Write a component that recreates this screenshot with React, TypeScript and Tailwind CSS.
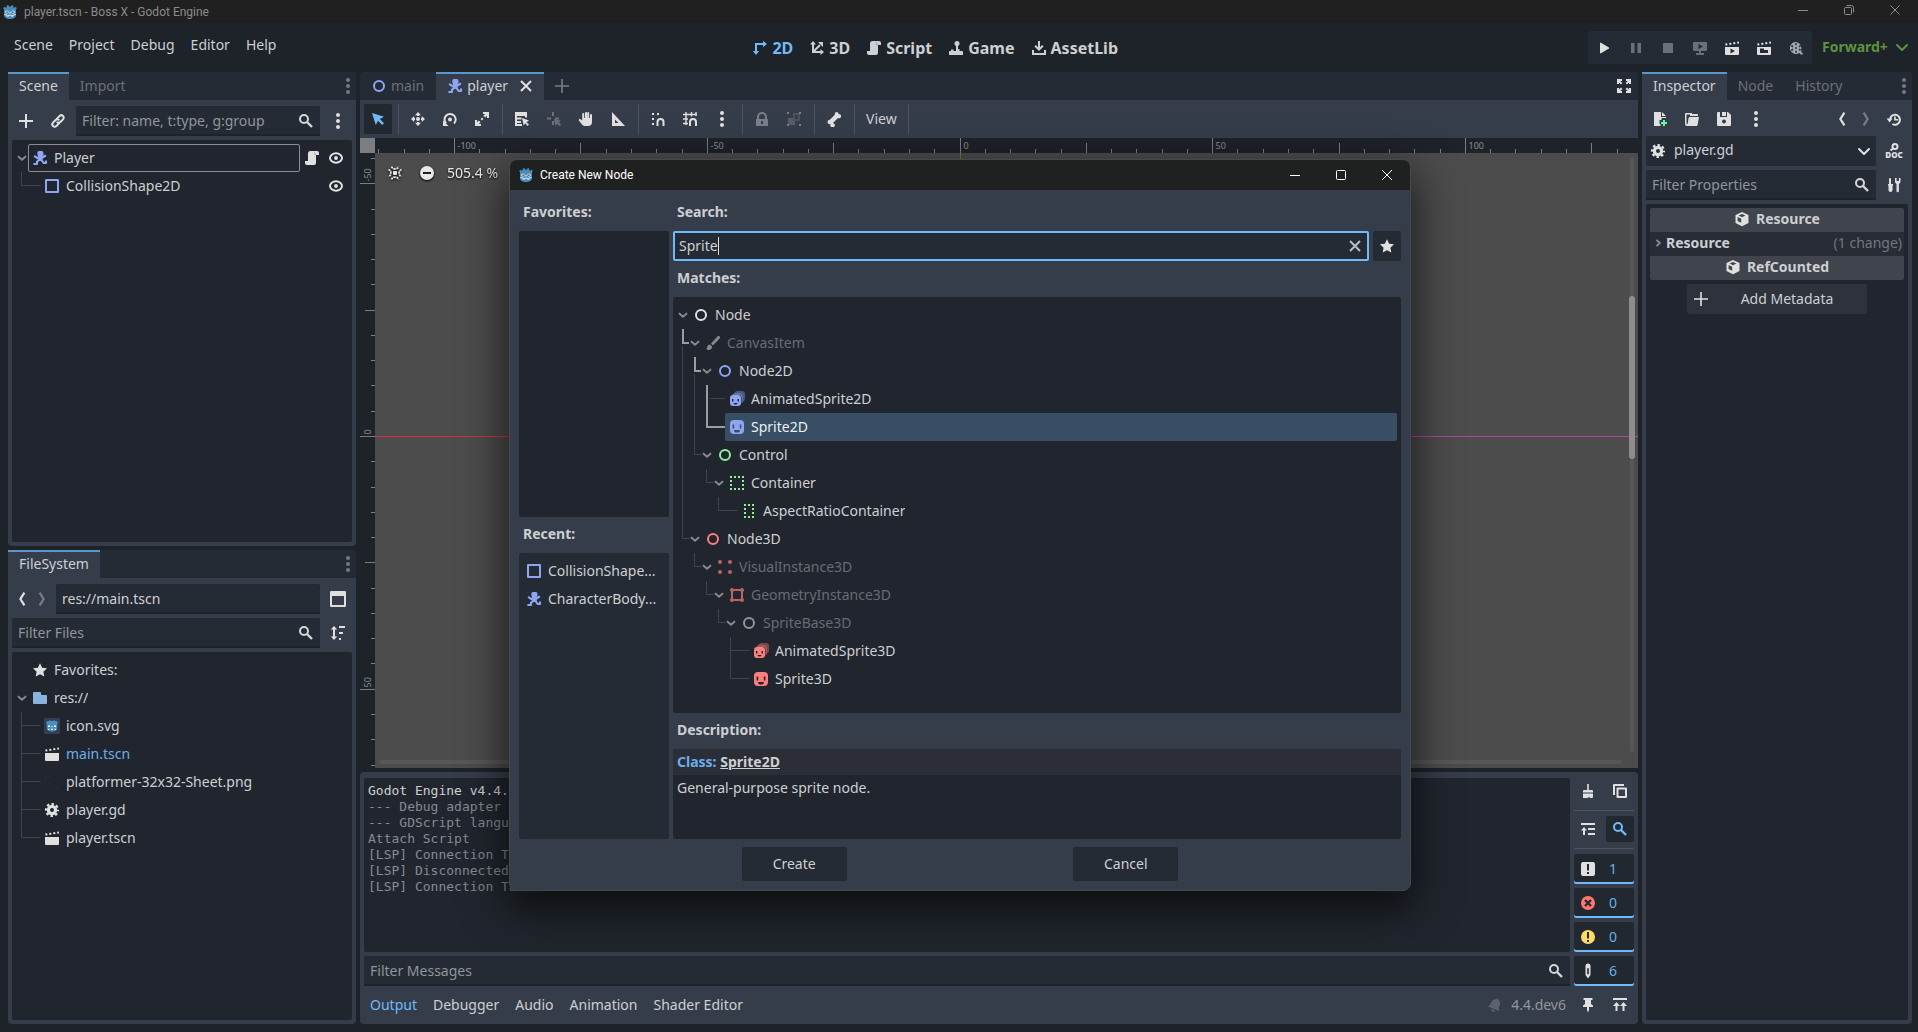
import type { ReactNode } from "react";

const icons: Record<string, ReactNode> = {
  node: <circle cx="8" cy="8" r="5" fill="none" stroke="currentColor" strokeWidth="2" />,
  collision: (
    <rect x="2" y="2" width="12" height="12" fill="none" stroke="currentColor" strokeWidth="2" strokeLinejoin="round" />
  ),
  character: (
    <g>
      <rect x="5.400" y="1" width="6" height="5" rx="1.500" />
      <path d="M6 5h4.500v4.500L9 11H6z" />
      <path
        d="M2.800 6.400 5.400 8M10 7.800l3.200-2M7 10 5 11.800V14H2.200M9.600 10l2 3H14v-1.600"
        fill="none"
        stroke="currentColor"
        strokeWidth="2.200"
        strokeLinejoin="round"
        strokeLinecap="round"
      />
    </g>
  ),
  plus: <path d="M7 1h2v6h6v2H9v6H7V9H1V7h6z" />,
  thinPlus: <path d="M7.200 1h1.600v6.200H15v1.600H8.800V15H7.200V8.800H1V7.200h6.200z" />,
  link: (
    <g fill="none" stroke="currentColor" strokeWidth="2" strokeLinecap="round">
      <path d="M7 5.600 9.600 3a2.400 2.400 0 0 1 3.400 3.400L10.400 9a2.400 2.400 0 0 1-3 .3" />
      <path d="M9 10.400 6.400 13A2.400 2.400 0 0 1 3 9.600L5.600 7a2.400 2.400 0 0 1 3-.3" />
    </g>
  ),
  search: (
    <g fill="none" stroke="currentColor" strokeWidth="2">
      <circle cx="6" cy="6" r="4" />
      <path d="m9 9 5 5" strokeWidth="2.400" />
    </g>
  ),
  kebab: (
    <g>
      <circle cx="8" cy="2" r="2" />
      <circle cx="8" cy="8" r="2" />
      <circle cx="8" cy="14" r="2" />
    </g>
  ),
  chevron: <path d="m3.400 6.200 4.600 4 4.600-4" fill="none" stroke="currentColor" strokeWidth="2.600" strokeLinecap="round" />,
  chevronThin: <path d="m3 6 5 5 5-5" fill="none" stroke="currentColor" strokeWidth="2" strokeLinecap="round" strokeLinejoin="round" />,
  chevronRight: <path d="m6 3.800 4.400 4.200L6 12.200" fill="none" stroke="currentColor" strokeWidth="2.600" />,
  back: <path d="M10.400 1.600 6.400 8l4 6.400" fill="none" stroke="currentColor" strokeWidth="2.200" />,
  forward: <path d="m5.600 1.600 4 6.400-4 6.400" fill="none" stroke="currentColor" strokeWidth="2.200" />,
  close: <path d="m3 3 10 10M13 3 3 13" fill="none" stroke="currentColor" strokeWidth="2" />,
  eye: (
    <g>
      <ellipse cx="8" cy="8" rx="6" ry="4.700" fill="none" stroke="currentColor" strokeWidth="2" />
      <circle cx="8" cy="8" r="2" />
    </g>
  ),
  script: (
    <g>
      <path d="M6.500 1A2.500 2.500 0 0 0 4 3.500V11H1v2a2 2 0 0 0 2 2h7a2 2 0 0 0 2-2V5h3V3a2 2 0 0 0-2-2z" />
      <path d="M10.500 1.600v3.200h1.600" fill="none" stroke="#000" strokeOpacity=".18" />
    </g>
  ),
  window: <path d="M0 1.200A1.200 1.200 0 0 1 1.200 0h13.600A1.200 1.200 0 0 1 16 1.200v13.600a1.200 1.200 0 0 1-1.200 1.200H1.200A1.200 1.200 0 0 1 0 14.800zM2 5v9h12V5z" fillRule="evenodd" />,
  sort: (
    <path d="M4 1 .8 4.600H3v6.800H.8L4 15l3.200-3.600H5V4.600h2.200zM9 1h6v2H9zm0 6h4v2H9zm0 6h2v2H9z" />
  ),
  star: <path d="m8 1.200 2.100 4.500 4.900.6-3.600 3.400.9 4.900L8 12.200l-4.300 2.400.9-4.900L1 6.300l4.900-.6z" />,
  folder: <path d="M2 2a1 1 0 0 0-1 1v10a1 1 0 0 0 1 1h12a1 1 0 0 0 1-1V6a1 1 0 0 0-1-1h-4a1 1 0 0 1-1-1V3a1 1 0 0 0-1-1z" />,
  scene: (
    <g>
      <path d="M1 7h14v7a1 1 0 0 1-1 1H2a1 1 0 0 1-1-1z" />
      <path d="m1.200 3.600 1.800-.3.600 1.900-2 .3zM5 3l2-.3.600 1.900-2 .3zm4-.6 2-.3.500 1.900-2 .3zm4-.6 1.800-.3.300 1.900-1.600.3z" />
    </g>
  ),
  playScene: (
    <g>
      <path d="M1 7h14v7a1 1 0 0 1-1 1H2a1 1 0 0 1-1-1zm5.500 1.500v5l4.500-2.500z" fillRule="evenodd" />
      <path d="m1.200 3.600 1.800-.3.600 1.900-2 .3zM5 3l2-.3.600 1.900-2 .3zm4-.6 2-.3.500 1.900-2 .3zm4-.6 1.800-.3.300 1.900-1.600.3z" />
    </g>
  ),
  playCustom: (
    <g>
      <path d="M1 7h14v7a1 1 0 0 1-1 1H2a1 1 0 0 1-1-1zm3 1.500v4.500h8V10H8V8.500z" fillRule="evenodd" />
      <path d="m1.200 3.600 1.800-.3.600 1.900-2 .3zM5 3l2-.3.600 1.900-2 .3zm4-.6 2-.3.500 1.900-2 .3zm4-.6 1.800-.3.300 1.900-1.600.3z" />
    </g>
  ),
  gear: (
    <g fill="none" stroke="currentColor">
      <circle cx="8" cy="8" r="3.600" strokeWidth="3.200" />
      <circle cx="8" cy="8" r="6" strokeWidth="2.200" strokeDasharray="2.500 2.212" strokeDashoffset="1.250" />
    </g>
  ),
  cursor: <path d="m2 2 3.800 12 2.200-4.200 4.200 4.200 1.800-1.800-4.200-4.200L14 5.800z" />,
  move: (
    <g>
      <circle cx="8" cy="8" r="2" />
      <path d="M8 1 5 4.200h2V5h2v-.8h2zM8 15l-3-3.200h2V11h2v.8h2zM1 8l3.200-3v2H5v2h-.8v2zM15 8l-3.200-3v2H11v2h.8v2z" />
    </g>
  ),
  rotate: (
    <g>
      <circle cx="8" cy="8.500" r="2" />
      <path d="M12 12.500a5.600 5.600 0 1 0-8-.2" fill="none" stroke="currentColor" strokeWidth="2" />
      <path d="M1 9.500V15h5.500z" />
    </g>
  ),
  scale: (
    <g>
      <path d="M15 1H9v2h2.200L9.400 4.800l1.800 1.800L13 4.800V7h2zM1 15h6v-2H4.800l1.800-1.800-1.800-1.800L3 11.200V9H1z" />
      <path d="M6.600 8 8 6.600 9.400 8 8 9.400z" />
    </g>
  ),
  listSelect: (
    <path d="M1 1h12v5.500h-2V5H3v1.500h4.500v2H3V10h4v2H3v1h5v2H1zm7 6 1.700 7.500 1.500-2.300 2.300 2.800 1.500-1.500-2.600-2.300L15 9.500z" />
  ),
  pivot: (
    <path d="M6 1h2v4H6zM1 6.500h4v2H1zm8 0h4v2H9zM6 10h2v4H6zm2-2 1.600 7 1.600-2.200L13.500 15l1.500-1.500-2.300-2.300L15 9.800z" opacity=".8" />
  ),
  hand: (
    <path d="M8 1a1 1 0 0 0-1 1v5H6.200V3a1 1 0 0 0-2 0v6.500L2.600 8.200a1.100 1.100 0 0 0-1.600 1.500l3.500 4.200A3 3 0 0 0 6.800 15H10a4 4 0 0 0 4-4V4a1 1 0 0 0-2 0v3h-.8V2a1 1 0 0 0-2 0v5H9V2a1 1 0 0 0-1-1z" />
  ),
  ruler: <path d="M2 1v14h13zm3 7.500 3.500 3.500H5z" fillRule="evenodd" />,
  snap: (
    <g>
      <path d="M2 2h2v2H2zm5 0h2v2H7zM2 7h2v2H2zm0 5h2v2H2z" />
      <path d="M7.500 15v-4a3 3 0 0 1 6 0v4" fill="none" stroke="currentColor" strokeWidth="2" />
    </g>
  ),
  gridSnap: (
    <g fill="none" stroke="currentColor" strokeWidth="1.400">
      <path d="M4 1v13M9.500 1v4.500M14 1v4M1 3.500h14M1 8h5M1 12.500h5" />
      <path d="M8 15v-4a3 3 0 0 1 6 0v4" strokeWidth="2" />
    </g>
  ),
  lock: <path d="M8 1a5 5 0 0 0-5 5v2H2v7h12V8h-1V6a5 5 0 0 0-5-5zm0 2a3 3 0 0 1 3 3v2H5V6a3 3 0 0 1 3-3zM7 10h2v3H7z" fillRule="evenodd" />,
  group: (
    <g>
      <path d="M1 1h2v2H1zm12 0h2v2h-2zM1 13h2v2H1zm12 0h2v2h-2z" />
      <path d="M2 7h5v3h2v4H2z" opacity=".5" />
      <path d="M8 3h5v6H8z" fill="none" stroke="currentColor" strokeWidth="2" opacity=".35" />
    </g>
  ),
  bone: (
    <path d="M11 1a2.200 2.200 0 0 0-2.200 2.800L3.800 8.800A2.200 2.200 0 1 0 5 12.800 2.200 2.200 0 1 0 7.200 12.200l-.2-.3 5-4.800a2.200 2.200 0 1 0 .6-4.200A2.200 2.200 0 0 0 11 1z" />
  ),
  expand: (
    <path d="M1 1h5v2H4.400l2 2L5 6.400l-2-2V6H1zm14 0v5h-2V4.400l-2 2L9.600 5l2-2H10V1zM1 15v-5h2v1.600l2-2L6.400 11l-2 2H6v2zm14 0h-5v-2h1.600l-2-2L11 9.600l2 2V10h2z" />
  ),
  center: (
    <g>
      <rect x="6" y="6" width="4" height="4" rx="1" />
      <path
        d="M4.500 1.500C5 3 6 3.800 8 3.800s3-.8 3.500-2.300M4.500 14.500c.5-1.500 1.500-2.300 3.500-2.300s3 .8 3.500 2.300M1.500 4.500C3 5 3.800 6 3.800 8s-.8 3-2.300 3.500M14.500 4.500C13 5 12.200 6 12.200 8s.8 3 2.300 3.500"
        fill="none"
        stroke="currentColor"
        strokeWidth="1.800"
        strokeDasharray="2.200 .7"
      />
    </g>
  ),
  minusCircle: <path d="M8 1a7 7 0 1 0 0 14A7 7 0 0 0 8 1zM4 7h8v2H4z" fillRule="evenodd" />,
  twoD: (
    <g>
      <path d="M4 12V4h8" fill="none" stroke="currentColor" strokeWidth="2" />
      <path d="m11 .8 4 3.200-4 3.200zM.8 11 4 15l3.200-4z" />
    </g>
  ),
  threeD: (
    <g>
      <path d="M4 4v8h8M4 12l7-7" fill="none" stroke="currentColor" strokeWidth="2" />
      <path d="M4 1 1 4.500h6zm11 11-3.500-3v6zM14 2H9l5 5z" />
    </g>
  ),
  game: (
    <g>
      <circle cx="9" cy="3.500" r="2.500" />
      <path d="M8 5h2v4h1.500v2H14a1 1 0 0 1 1 1v3H1v-3a1 1 0 0 1 1-1h1V9.500h2.500V11H8z" />
    </g>
  ),
  assetLib: (
    <path d="M7 1v6.200L4.900 5 3.400 6.500 8 11l4.600-4.500L11.100 5 9 7.200V1zM1 10v5h14v-5h-2v3H3v-3z" />
  ),
  play: <path d="M4 3.200v9.600a.6.600 0 0 0 .9.500l8-4.800a.6.600 0 0 0 0-1L4.900 2.700a.6.600 0 0 0-.9.500z" />,
  pause: <path d="M3 3h3.500v10H3zm6.500 0H13v10H9.500z" />,
  stop: <rect x="3" y="3" width="10" height="10" rx=".6" />,
  remote: (
    <path d="M2 2a1 1 0 0 0-1 1v7a1 1 0 0 0 1 1h5v2H4v2h8v-2H9v-2h5a1 1 0 0 0 1-1V3a1 1 0 0 0-1-1zm4.500 2 4.500 2.500L6.500 9z" fillRule="evenodd" />
  ),
  movie: (
    <path
      d="M8 2a6 6 0 1 0 3.500 10.800c.3 1.300 1.300 2 3 2v-2c-.8 0-1.200-.4-1.200-1.200V8A6 6 0 0 0 8 2zm-.8 1.200h1.600v2H7.200zM3.800 5 5.500 6l-.8 1.400L3 6.400zm8.400 0 .8 1.400-1.700 1L10.500 6zM8 7a1 1 0 1 1 0 2 1 1 0 0 1 0-2zM4.700 8.600l.8 1.400-1.700 1L3 9.600zm6.600 0 1.700 1-.8 1.400-1.700-1zm-4.100 2.200h1.600v2H7.200z"
      fillRule="evenodd"
    />
  ),
  fileNew: (
    <g>
      <path d="M2 1v14h6.500v-2H7.500v-4h2V7H14V6H9V1zm8 0v4h4z" />
      <path d="M11 9h2v2h2v2h-2v2h-2v-2H9v-2h2z" fill="#5fff97" />
    </g>
  ),
  open: (
    <path d="M2 2a1 1 0 0 0-1 1v10a2 2 0 0 0 2 2h9.500a1 1 0 0 0 1-.8L15 6H6a1.500 1.500 0 0 0-1.500 1.200L3.600 13H2.500V3.500H6V5h8V4a1 1 0 0 0-1-1H8V2z" />
  ),
  save: <path d="M2 1a1 1 0 0 0-1 1v12a1 1 0 0 0 1 1h12a1 1 0 0 0 1-1V4l-3-3zm2 0h2v4h4V1h1v5H4zm4 7.500a2 2 0 1 1 0 4 2 2 0 0 1 0-4z" fillRule="evenodd" />,
  history: (
    <g>
      <path d="M4 9a5 5 0 1 1 2.400 4" fill="none" stroke="currentColor" strokeWidth="2" />
      <path d="M.6 7.500h6L3.600 11.500zM8.200 5.500h1.600V8h2.400v1.600h-4z" />
    </g>
  ),
  tools: (
    <path d="M4 1a1 1 0 0 0-1 1v5H2v1l.5 1v4a2 2 0 0 0 4 0V9L7 8V7H5V2a1 1 0 0 0-1-1zM9 1v3.500a3 3 0 0 0 1.500 2.500v7a1.200 1.200 0 0 0 2.400 0V7A3 3 0 0 0 14.500 4.500V1h-1.600v3h-2.300V1z" />
  ),
  cube: (
    <path d="m8 .9-6.500 3v8.200L8 15.200l6.500-3.100V3.900zm0 2 3.400 1.600L8 6.300 4.600 4.500zM3.600 6l3.600 1.700v4.100L3.600 10z" fillRule="evenodd" />
  ),
  broom: <path d="M7.200 1h1.600v6H12a1 1 0 0 1 1 1v1.500H3V8a1 1 0 0 1 1-1h3.200zM3 10.500h10V14a1 1 0 0 1-1 1H9.500l.5-1.500L7.500 15H3z" />,
  copy: (
    <g fill="none" stroke="currentColor" strokeWidth="2" strokeLinejoin="round">
      <path d="M2 12V2h10" />
      <rect x="5.500" y="5.500" width="8.500" height="8.500" />
    </g>
  ),
  collapse: <path d="M1 2h14v2H1zm7 5h7v2H8zm0 5h7v2H8zM4 6l3 3.500H5V14H3V9.500H1z" />,
  message: <path d="M3 1h10a2 2 0 0 1 2 2v10a2 2 0 0 1-2 2H3a2 2 0 0 1-2-2V3a2 2 0 0 1 2-2zm4 2v6.500h2V3zm0 8v2h2v-2z" fillRule="evenodd" />,
  error: (
    <g>
      <circle cx="8" cy="8" r="7" fill="#ff786b" />
      <path d="m5 5 6 6m0-6-6 6" stroke="#252b34" strokeWidth="2.400" />
    </g>
  ),
  warning: (
    <g>
      <circle cx="8" cy="8" r="7" fill="#ffdd65" />
      <path d="M7 3h2v6.500H7zm0 8h2v2H7z" fill="#252b34" />
    </g>
  ),
  edit: <path d="M5.500 3a2.500 2.500 0 0 1 5 0v9L8 15.400 5.500 12zm1.700 2.200v6h1.600v-6z" fillRule="evenodd" />,
  pin: <path d="M3.500 1h9v2H11v4l2 1.500V10H9v3l-1 2.500L7 13v-3H3V8.500L5 7V3H3.500z" />,
  toTop: <path d="M1 1h14v2H1zm3.500 4L8 9H5.500v5h-2V9H1zm7 0L15 9h-2.500v5h-2V9H8z" />,
  bell: (
    <g transform="rotate(22 8 8)">
      <path d="M8 1a1.200 1.200 0 0 0-1.200 1.200A4.500 4.500 0 0 0 3.500 6.500v3L2 12h12l-1.500-2.500v-3a4.500 4.500 0 0 0-3.300-4.300A1.200 1.200 0 0 0 8 1zM6 13a2 2 0 0 0 4 0z" />
    </g>
  ),
  brush: <path d="M14.600 1.400a1.500 1.500 0 0 0-2.200 0L6 8.500 8 10.500l6.600-7a1.500 1.500 0 0 0 0-2.100zM5 9.500c-1.600 0-2.400.8-2.600 2.200-.1.900-.5 1.500-1.200 2 .8 1.200 2.800 1.500 4 1 1.600-.6 2-2 1.800-3.200z" />,
  container: (
    <path d="M2 2h12v12H2z" fill="none" stroke="currentColor" strokeWidth="2" strokeDasharray="2 2" strokeDashoffset="1" />
  ),
  aspect: (
    <path d="M4 2h8v12H4z" fill="none" stroke="currentColor" strokeWidth="2" strokeDasharray="2 2" strokeDashoffset="1" />
  ),
  visual: (
    <g>
      <circle cx="3" cy="3" r="2" />
      <circle cx="13" cy="3" r="2" />
      <circle cx="3" cy="13" r="2" />
      <circle cx="13" cy="13" r="2" />
    </g>
  ),
  geometry: (
    <g>
      <path d="M3 3h10v10H3z" fill="none" stroke="currentColor" strokeWidth="2" />
      <circle cx="3" cy="3" r="2" />
      <circle cx="13" cy="3" r="2" />
      <circle cx="3" cy="13" r="2" />
      <circle cx="13" cy="13" r="2" />
    </g>
  ),
  sprite: (
    <path
      d="M5 1a4 4 0 0 0-4 4v6a4 4 0 0 0 4 4h6a4 4 0 0 0 4-4V5a4 4 0 0 0-4-4zM3.600 5.500h1.600v4H3.600zm7.200 0h1.600v4h-1.600zM5 11h6a3 2.600 0 0 1-6 0z"
      fillRule="evenodd"
    />
  ),
  animatedSprite: (
    <g>
      <path d="M8 0h5a3 3 0 0 1 3 3v5a3 3 0 0 1-2 2.500V5a3 3 0 0 0-3-3H5.500A3 3 0 0 1 8 0z" opacity=".4" />
      <path d="M6 2h5a3 3 0 0 1 3 3v5a3 3 0 0 1-1.500 2.500V7a3 3 0 0 0-3-3H3.500A3 3 0 0 1 6 2z" opacity=".6" />
      <path
        d="M4 4a3 3 0 0 0-3 3v5a3 3 0 0 0 3 3h5a3 3 0 0 0 3-3V7a3 3 0 0 0-3-3zM3 8h1.400v2.500H3zm5.600 0H10v2.500H8.600zM4.500 12h4a2 1.600 0 0 1-4 0z"
        fillRule="evenodd"
      />
    </g>
  ),
  logo: (
    <g>
      <path
        d="M6.300 1 4.700 1.400l.2 1.600-1.200.7L2.500 2.700 1.200 4l.8 1.600V11c0 2.600 2.800 4 6 4s6-1.400 6-4V5.600L14.800 4l-1.300-1.300-1.200 1-1.200-.7.200-1.600L9.700 1l-.7 1.500H7z"
        fill="#478cbf"
      />
      <circle cx="4.900" cy="8" r="1.600" fill="#fff" />
      <circle cx="11.100" cy="8" r="1.600" fill="#fff" />
      <circle cx="5.100" cy="8.100" r=".9" fill="#414042" />
      <circle cx="10.900" cy="8.100" r=".9" fill="#414042" />
      <path d="M7.500 7.800h1v1.800h-1z" fill="#fff" />
      <path d="M2.400 10.600 5 11v1.200h1.600v-1h2.800v1H11V11l2.600-.4" fill="none" stroke="#fff" strokeWidth=".8" />
    </g>
  ),
  iconSvg: (
    <g>
      <rect x="0" y="0" width="16" height="16" rx="1.500" fill="#363d52" />
      <path d="M6 1.800 7 3h2l1-1.200 1.200 1.400 1.300-.4L14 5l-.8 1.200v4.200c0 4-10.400 4-10.400 0V6.200L2 5l1.500-2.200 1.300.4z" fill="#478cbf" />
      <path d="M4 7.500h2V9H4zm6 0h2V9h-2zM7.500 8h1v1.300h-1zM4 10.800h1.500v1H4zm3 0h2v1H7zm3.500 0H12v1h-1.500z" fill="#fff" />
    </g>
  ),
  sheet: (
    <path d="M1 1h1v1H1zm3 2h1v1H4zM1 6h1v1H1zm4 3h1v1H5zm-4 3h1v1H1zm5 2h1v1H6zm6-1h2v1h-2zM2 3h1v1H2z" />
  ),
};

const Icon = ({ name, className = "size-4" }: { name: string; className?: string }) => (
  <svg viewBox="0 0 16 16" fill="currentColor" aria-hidden="true" className={`shrink-0 ${className}`}>
    {icons[name]}
  </svg>
);

type IconButtonProps = {
  icon: string;
  label: string;
  className?: string;
};

const IconButton = ({ icon, label, className = "h-[30px] w-7 text-[#e0e0e0]" }: IconButtonProps) => (
  <button type="button" aria-label={label} className={`flex shrink-0 items-center justify-center rounded-xs ${className}`}>
    <Icon name={icon} />
  </button>
);

const DocIcon = () => (
  <span className="flex flex-col items-center">
    <svg viewBox="0 0 16 8" fill="none" stroke="currentColor" strokeWidth="2" className="h-2 w-4" aria-hidden="true">
      <circle cx="9" cy="3.500" r="2.500" />
      <path d="m7 5.500-2.500 2" />
    </svg>
    <span className="text-[8px] leading-[8px] font-black">DOC</span>
  </span>
);

const Separator = () => (
  <div className="flex h-[30px] w-1 justify-center">
    <div className="w-px bg-[#4d535f]" />
  </div>
);

const Dock = ({ tabs, children, className }: { tabs: string[]; children: ReactNode; className: string }) => (
  <section className={`flex min-h-0 flex-col rounded-sm bg-[#363d4a] ${className}`}>
    <div className="flex h-7 shrink-0 rounded-t-sm bg-[#252b34]">
      {tabs.map((tab, i) => (
        <button
          type="button"
          key={tab}
          className={
            i === 0
              ? "border-t-2 border-[#5b97ca] bg-[#363d4a] px-[11px] pb-0.5 text-[#cdcfd2]"
              : "px-[11px] text-[#6c7078]"
          }
        >
          {tab}
        </button>
      ))}
      <IconButton icon="kebab" label="Dock menu" className="ml-auto h-7 w-4 text-[#75797f]" />
    </div>
    {children}
  </section>
);

type FilterProps = { label: string; value?: string; search?: boolean };

const Filter = ({ label, value, search = true }: FilterProps) => (
  <label className="flex h-[30px] min-w-0 flex-1 items-center rounded-t-xs bg-[#252b34] px-1.5 shadow-[inset_0_-2px_0_#1e2229]">
    <input
      type="text"
      aria-label={label}
      placeholder={label}
      defaultValue={value}
      className="min-w-0 flex-1 bg-transparent text-[#cdcfd2] outline-none placeholder:text-[#919499]"
    />
    {search && <Icon name="search" className="size-4 text-[#d5d6d8]" />}
  </label>
);

type TreeItem = {
  text: string;
  icon: string;
  color: string;
  level: number;
  open?: boolean;
  textColor?: string;
  boxClass?: string;
  trailing?: ReactNode;
};

const TreeRow = ({ text, icon, color, level, open, textColor = "text-[#cdcfd2]", boxClass = "", trailing }: TreeItem) => (
  <li className="flex h-7 items-center pr-1 pl-1" style={{ paddingLeft: 4 + level * 12 }}>
    <span className="flex w-3 shrink-0 justify-center text-[#85888e]">
      {open && <Icon name="chevron" className="size-3" />}
    </span>
    <span className={`flex h-7 min-w-0 flex-1 items-center gap-1.5 pl-1 ${boxClass}`}>
      <Icon name={icon} className={`size-4 ${color}`} />
      <span className={`truncate ${textColor}`}>{text}</span>
    </span>
    {trailing}
  </li>
);

const Guides = ({ thin, thick }: { thin: string; thick?: string }) => (
  <svg className="pointer-events-none absolute inset-0 size-full" fill="none" aria-hidden="true">
    <path d={thin} stroke="#40444c" />
    {thick && <path d={thick} stroke="#9b9da1" strokeWidth="2" />}
  </svg>
);

const blue = "text-[#8da5f3]";
const green = "text-[#8eef97]";
const red = "text-[#fc7f7f]";
const white = "text-[#e0e0e0]";
const dim = "text-[#686b72]";

const files: TreeItem[] = [
  { text: "Favorites:", icon: "star", color: white, level: 0 },
  { text: "res://", icon: "folder", color: "text-[#8ab4dc]", level: 0, open: true },
  { text: "icon.svg", icon: "iconSvg", color: white, level: 1 },
  { text: "main.tscn", icon: "scene", color: white, level: 1, textColor: "text-[#69aeec]" },
  { text: "platformer-32x32-Sheet.png", icon: "sheet", color: "text-[#223642]", level: 1 },
  { text: "player.gd", icon: "gear", color: white, level: 1 },
  { text: "player.tscn", icon: "scene", color: white, level: 1 },
];

const matches: TreeItem[] = [
  { text: "Node", icon: "node", color: white, level: 0, open: true },
  { text: "CanvasItem", icon: "brush", color: "text-[#87888b]", level: 1, open: true, textColor: dim },
  { text: "Node2D", icon: "node", color: blue, level: 2, open: true },
  { text: "AnimatedSprite2D", icon: "animatedSprite", color: blue, level: 3 },
  {
    text: "Sprite2D",
    icon: "sprite",
    color: blue,
    level: 3,
    textColor: "text-[#eceef0]",
    boxClass: "rounded-xs bg-[#384e65]",
  },
  { text: "Control", icon: "node", color: green, level: 2, open: true },
  { text: "Container", icon: "container", color: green, level: 3, open: true },
  { text: "AspectRatioContainer", icon: "aspect", color: green, level: 4 },
  { text: "Node3D", icon: "node", color: red, level: 1, open: true },
  { text: "VisualInstance3D", icon: "visual", color: "text-[#b86466]", level: 2, open: true, textColor: dim },
  { text: "GeometryInstance3D", icon: "geometry", color: "text-[#b86466]", level: 3, open: true, textColor: dim },
  { text: "SpriteBase3D", icon: "node", color: "text-[#939497]", level: 4, open: true, textColor: dim },
  { text: "AnimatedSprite3D", icon: "animatedSprite", color: red, level: 5 },
  { text: "Sprite3D", icon: "sprite", color: red, level: 5 },
];

const recent = [
  { text: "CollisionShape...", icon: "collision" },
  { text: "CharacterBody...", icon: "character" },
];

const log = [
  "--- Debug adapter server started on port 6006 ---",
  "--- GDScript language server started on port 6005 ---",
  "Attach Script",
  "[LSP] Connection Taken",
  "[LSP] Disconnected",
  "[LSP] Connection Taken",
];

const counters = [
  { icon: "message", label: "Messages", count: 1 },
  { icon: "error", label: "Errors", count: 0 },
  { icon: "warning", label: "Warnings", count: 0 },
  { icon: "edit", label: "Editor messages", count: 6 },
];

// Pixels between two small ruler ticks (5 units each)
const STEP = 25.27;

const tickSize = (n: number) => {
  if (n % 10 === 0) return 15;
  return n % 5 === 0 ? 10 : 4;
};

const range = (from: number, to: number) => Array.from({ length: to - from + 1 }, (_, i) => from + i);

const TopRuler = () => (
  <svg className="h-[15px] min-w-0 flex-1 bg-[#1e2229]" aria-hidden="true">
    {range(-23, 27).map((n) => {
      const x = Math.floor(585 + n * STEP) + 0.5;
      return (
        <g key={n}>
          <path d={`M${x} 15v-${tickSize(n)}`} stroke="#797c80" />
          {n % 10 === 0 && (
            <text x={x + 3} y="11" fontSize="9" fill="#898c90">
              {n * 5}
            </text>
          )}
        </g>
      );
    })}
  </svg>
);

const SideRuler = () => (
  <svg className="w-[15px] shrink-0 self-stretch bg-[#1e2229]" aria-hidden="true">
    {range(-11, 13).map((n) => {
      const y = Math.round(283 + n * STEP) + 0.5;
      return (
        <g key={n}>
          <path d={`M15 ${y}h-${tickSize(n)}`} stroke="#797c80" />
          {n % 10 === 0 && (
            <text transform={`translate(11 ${y - 2}) rotate(-90)`} fontSize="9" fill="#898c90">
              {n * 5}
            </text>
          )}
        </g>
      );
    })}
  </svg>
);

const TitleBar = () => (
  <header className="flex h-[23px] shrink-0 items-center bg-[#202020] pl-0.5 font-['Roboto','Noto_Sans',sans-serif] text-xs text-[#8b8b8b]">
    <Icon name="logo" className="size-4" />
    <span className="ml-1.5">player.tscn - Boss X - Godot Engine</span>
    <div className="ml-auto flex pb-1">
      <button type="button" aria-label="Minimize" className="flex w-[46px] justify-center">
        <svg className="size-2.5" fill="none" stroke="currentColor">
          <path d="M0 5.500h10" />
        </svg>
      </button>
      <button type="button" aria-label="Restore" className="flex w-[46px] justify-center">
        <svg className="size-2.5" fill="none" stroke="currentColor">
          <rect x=".5" y="2.500" width="7" height="7" rx="1" />
          <path d="M2.500.5h5a2 2 0 0 1 2 2v5" />
        </svg>
      </button>
      <button type="button" aria-label="Close" className="flex w-[46px] justify-center">
        <svg className="size-2.5" fill="none" stroke="currentColor">
          <path d="m.5.5 9 9m0-9-9 9" />
        </svg>
      </button>
    </div>
  </header>
);

const MenuBar = () => (
  <div className="flex h-[49px] shrink-0 items-center justify-between pr-1.5 pl-3.5">
    <nav className="flex gap-4 pr-1.5 pb-1.5">
      {["Scene", "Project", "Debug", "Editor", "Help"].map((item) => (
        <button type="button" key={item}>
          {item}
        </button>
      ))}
    </nav>
    <nav className="flex gap-4 text-base font-bold">
      {[
        ["twoD", "2D"],
        ["threeD", "3D"],
        ["script", "Script"],
        ["game", "Game"],
        ["assetLib", "AssetLib"],
      ].map(([icon, text], i) => (
        <button type="button" key={text} className={`flex items-center gap-1 ${i === 0 ? "text-[#70bafa]" : ""}`}>
          <Icon name={icon} />
          {text}
        </button>
      ))}
    </nav>
    <div className="flex items-center">
      <div className="flex h-[33px] rounded-xs bg-[#252b34]">
        {[
          ["play", "Play", "text-[#e0e0e0]"],
          ["pause", "Pause", "text-[#6b6f77]"],
          ["stop", "Stop", "text-[#6b6f77]"],
          ["remote", "Remote deploy", "text-[#6b6f77]"],
          ["playScene", "Play scene", "text-[#e0e0e0]"],
          ["playCustom", "Play custom scene", "text-[#e0e0e0]"],
          ["movie", "Movie maker", "text-[#a6a8ab]"],
        ].map(([icon, label, color]) => (
          <IconButton key={icon} icon={icon} label={label} className={`h-[33px] w-8 ${color}`} />
        ))}
      </div>
      <div className="relative ml-2.5 flex items-center pb-0.5 font-bold text-[#5b9440]">
        <select aria-label="Renderer" className="w-[90px] appearance-none bg-transparent outline-none">
          <option>Forward+</option>
        </select>
        <Icon name="chevronThin" className="pointer-events-none absolute right-0.5 size-4" />
      </div>
    </div>
  </div>
);

const SceneDock = () => (
  <Dock tabs={["Scene", "Import"]} className="flex-1">
    <div className="flex min-h-0 flex-1 flex-col gap-1 p-1 pt-1.5">
      <div className="flex gap-1">
        <IconButton icon="plus" label="Add node" />
        <IconButton icon="link" label="Instantiate scene" />
        <Filter label="Filter: name, t:type, g:group" />
        <IconButton icon="kebab" label="Scene options" />
      </div>
      <div className="relative min-h-0 flex-1 rounded-xs bg-[#21262e] py-1">
        <Guides thin="M9.500 32v13.500h19" />
        <ul>
          <TreeRow
            text="Player"
            icon="character"
            color={blue}
            level={0}
            open
            boxClass="rounded-xs border border-[#8b8d92] -my-px pl-[3px]"
            trailing={
              <span className="flex w-12 shrink-0 justify-between pr-1 pl-1">
                <Icon name="script" className="size-4 text-[#e0e0e0]" />
                <Icon name="eye" className="size-4 text-[#e0e0e0]" />
              </span>
            }
          />
          <TreeRow
            text="CollisionShape2D"
            icon="collision"
            color={blue}
            level={1}
            trailing={
              <span className="flex pr-1">
                <Icon name="eye" className="size-4 text-[#e0e0e0]" />
              </span>
            }
          />
        </ul>
      </div>
    </div>
  </Dock>
);

const FileSystemDock = () => (
  <Dock tabs={["FileSystem"]} className="flex-1">
    <div className="flex min-h-0 flex-1 flex-col gap-1 p-1 pt-1.5">
      <div className="flex gap-1">
        <div className="flex">
          <IconButton icon="back" label="Back" className="h-[30px] w-5 text-[#e0e0e0]" />
          <IconButton icon="forward" label="Forward" className="h-[30px] w-5 text-[#797d84]" />
        </div>
        <Filter label="Path" value="res://main.tscn" search={false} />
        <IconButton icon="window" label="Split mode" />
      </div>
      <div className="flex gap-1">
        <Filter label="Filter Files" />
        <IconButton icon="sort" label="Sort files" />
      </div>
      <div className="relative min-h-0 flex-1 rounded-xs bg-[#21262e] py-1">
        <Guides thin="M9.500 60v125.500h19M9.500 73.500h19M9.500 101.500h19M9.500 129.500h19M9.500 157.500h19" />
        <ul>
          {files.map((file) => (
            <TreeRow key={file.text} {...file} />
          ))}
        </ul>
      </div>
    </div>
  </Dock>
);

const toolGroups = [
  ["move", "rotate", "scale"],
  ["listSelect", "pivot", "hand", "ruler"],
  ["snap", "gridSnap", "kebab"],
  ["lock", "group"],
  ["bone"],
];
const disabledTools = ["pivot", "lock", "group"];

const Viewport = () => (
  <section className="flex min-h-0 flex-1 flex-col rounded-t-sm">
    <div className="flex h-7 shrink-0 rounded-t-sm bg-[#252b34]">
      <button type="button" className="flex items-center gap-1 pr-3 pl-[11px] text-[#6c7078]">
        <Icon name="node" className="size-4 text-[#8da5f3]" />
        main
      </button>
      <div className="flex items-center border-t-2 border-[#5b97ca] bg-[#363d4a] pr-2.5 pb-0.5 pl-[11px]">
        <button type="button" className="flex items-center gap-1">
          <Icon name="character" className="size-4 text-[#8da5f3]" />
          player
        </button>
        <IconButton icon="close" label="Close tab" className="ml-2.5 size-4 text-[#e0e0e0]" />
      </div>
      <IconButton icon="thinPlus" label="New scene" className="ml-1 h-7 w-7 text-[#7b7e83]" />
      <IconButton icon="expand" label="Distraction free mode" className="ml-auto h-7 w-7 text-[#e0e0e0]" />
    </div>
    <div className="flex h-[38px] shrink-0 gap-1 bg-[#363d4a] px-1 pt-1">
      <IconButton icon="cursor" label="Select" className="h-[30px] w-7 bg-[#212830] text-[#70bafa]" />
      {toolGroups.map((group) => (
        <div key={group[0]} className="flex gap-1">
          <Separator />
          {group.map((tool) => (
            <IconButton
              key={tool}
              icon={tool}
              label={tool}
              className={`h-[30px] w-7 ${disabledTools.includes(tool) ? "text-[#7a7e85]" : "text-[#e0e0e0]"}`}
            />
          ))}
        </div>
      ))}
      <Separator />
      <button type="button" className="h-[30px] px-1.5">
        View
      </button>
      <Separator />
    </div>
    <div className="flex shrink-0">
      <div className="size-[15px] bg-[#7b7d81]" />
      <TopRuler />
    </div>
    <div className="flex min-h-0 flex-1">
      <SideRuler />
      <div className="relative min-w-0 flex-1 overflow-hidden bg-[#4c4c4c]">
        <svg className="absolute inset-0 size-full" aria-hidden="true">
          <path d="M585.500 0v283" stroke="#5d8a1e" />
          <path d="M0 283.500h585" stroke="#d03344" />
          <path d="M585 283.500h2000" stroke="#b0489f" />
        </svg>
        <div className="flex items-center px-4 pt-2.5 text-[#e8e8e8] drop-shadow-[0_1px_1px_#000]">
          <button type="button" aria-label="Center view" className="-ml-1">
            <Icon name="center" />
          </button>
          <button type="button" aria-label="Zoom out" className="ml-4">
            <Icon name="minusCircle" />
          </button>
          <button type="button" className="ml-3">
            505.4 %
          </button>
        </div>
        <div className="absolute top-1 right-1 bottom-4 w-1 rounded-full bg-[#575757]" />
        <div className="absolute top-[143px] right-[3px] h-[163px] w-1.5 rounded-full bg-[#8d8d8d]" />
        <div className="absolute right-4 bottom-1 left-1 h-1 rounded-full bg-[#575757]" />
      </div>
    </div>
  </section>
);

const OutputPanel = () => (
  <section className="flex shrink-0 flex-col rounded-sm bg-[#363d4a]">
    <div className="flex gap-1 px-1 pt-1.5">
      <div className="flex min-w-0 flex-1 flex-col gap-1">
        <div className="min-h-0 flex-1 rounded-xs bg-[#21262e] px-1 py-[5px] font-['DejaVu_Sans_Mono','Liberation_Mono',monospace] text-[13px] leading-4 whitespace-pre text-[#858990]">
          <p className="text-[#cdcfd2]">Godot Engine v4.4.dev6.official (c) 2007-present</p>
          {log.map((line, i) => (
            <p key={i}>{line}</p>
          ))}
        </div>
        <div className="flex">
          <Filter label="Filter Messages" />
        </div>
      </div>
      <div className="flex w-[60px] flex-col gap-1">
        <div className="flex gap-1">
          <IconButton icon="broom" label="Clear output" className="h-[26px] w-7 text-[#e0e0e0]" />
          <IconButton icon="copy" label="Copy selection" className="h-[26px] w-7 text-[#e0e0e0]" />
        </div>
        <div className="flex h-1 items-center">
          <div className="h-px flex-1 bg-[#4d535f]" />
        </div>
        <div className="flex gap-1">
          <IconButton icon="collapse" label="Collapse duplicates" className="h-[26px] w-7 text-[#e0e0e0]" />
          <IconButton icon="search" label="Show search" className="h-[26px] w-7 bg-[#212830] text-[#70bafa]" />
        </div>
        <div className="flex h-1 items-center">
          <div className="h-px flex-1 bg-[#4d535f]" />
        </div>
        {counters.map(({ icon, label, count }) => (
          <button
            type="button"
            key={icon}
            aria-label={label}
            className="flex h-[30px] items-center rounded-xs bg-[#212830] pr-1 pl-1.5 text-[#69aeec] shadow-[inset_0_-2px_0_#70bafa]"
          >
            <Icon name={icon} className="size-4 text-[#e0e0e0]" />
            <span className="flex-1 text-center">{count}</span>
          </button>
        ))}
      </div>
    </div>
    <div className="flex h-[38px] items-center gap-4 pr-1 pl-2.5">
      {["Output", "Debugger", "Audio", "Animation", "Shader Editor"].map((tab, i) => (
        <button type="button" key={tab} className={i === 0 ? "text-[#70bafa]" : ""}>
          {tab}
        </button>
      ))}
      <div className="ml-auto flex items-center gap-2 text-[#92969d]">
        <Icon name="bell" className="size-4 text-[#5c626d]" />
        <button type="button">4.4.dev6</button>
        <div className="flex gap-1">
          <IconButton icon="pin" label="Pin bottom panel" />
          <IconButton icon="toTop" label="Expand bottom panel" />
        </div>
      </div>
    </div>
  </section>
);

const Inspector = () => (
  <Dock tabs={["Inspector", "Node", "History"]} className="w-[270px] shrink-0">
    <div className="flex min-h-0 flex-1 flex-col gap-1 p-1">
      <div className="flex flex-col gap-0.5">
        <div className="flex gap-1">
          <IconButton icon="fileNew" label="New resource" />
          <IconButton icon="open" label="Load resource" />
          <IconButton icon="save" label="Save resource" />
          <IconButton icon="kebab" label="Resource options" />
          <IconButton icon="back" label="Previous object" className="ml-auto h-[30px] w-5 text-[#e0e0e0]" />
          <IconButton icon="forward" label="Next object" className="h-[30px] w-5 text-[#797d84]" />
          <IconButton icon="history" label="Object history" />
        </div>
        <div className="flex gap-1">
          <div className="relative flex h-[30px] flex-1 items-center rounded-xs bg-[#252b34] px-1">
            <Icon name="gear" className="size-4 text-[#e0e0e0]" />
            <select aria-label="Edited object" className="flex-1 appearance-none bg-transparent pb-0.5 pl-2 outline-none">
              <option>player.gd</option>
            </select>
            <Icon name="chevronThin" className="pointer-events-none absolute right-1 size-4 text-[#e0e0e0]" />
          </div>
          <button type="button" aria-label="Open documentation" className="flex w-7 items-center justify-center text-[#e0e0e0]">
            <DocIcon />
          </button>
        </div>
      </div>
      <div className="flex gap-1">
        <Filter label="Filter Properties" />
        <IconButton icon="tools" label="Manage object properties" />
      </div>
      <div className="min-h-0 flex-1 rounded-xs bg-[#21262e] p-1 text-[#cdcfd2]">
        <h2 className="flex h-6 items-center justify-center gap-1.5 rounded-t-xs bg-[#40444c] pb-0.5 font-bold">
          <Icon name="cube" className="size-4 text-[#e0e0e0]" />
          Resource
        </h2>
        <button type="button" className="flex h-6 w-full items-center gap-0.5 bg-[#282c34] px-0.5 pb-0.5">
          <Icon name="chevronRight" className="size-3 text-[#85888e]" />
          <span className="font-bold">Resource</span>
          <span className="ml-auto text-[#73767c]">(1 change)</span>
        </button>
        <h2 className="flex h-6 items-center justify-center gap-1.5 rounded-b-xs bg-[#40444c] pb-0.5 font-bold">
          <Icon name="cube" className="size-4 text-[#e0e0e0]" />
          RefCounted
        </h2>
        <button type="button" className="mx-auto mt-1 flex h-[30px] w-[180px] items-center rounded-xs bg-[#2e323b] pr-0.5 pl-1.5">
          <Icon name="thinPlus" className="size-4 text-[#e0e0e0]" />
          <span className="flex-1 text-center">Add Metadata</span>
        </button>
      </div>
    </div>
  </Dock>
);

const CreateNodeDialog = () => (
  <div
    role="dialog"
    aria-label="Create New Node"
    className="absolute top-[159px] left-[509px] flex h-[732px] w-[902px] flex-col overflow-hidden rounded-lg border border-[#474a4d] bg-[#363d4a] shadow-[0_16px_44px_4px_rgba(0,0,0,0.65)]"
  >
    <div className="flex h-[30px] shrink-0 items-center bg-[#1f2121] pl-2 font-['Roboto','Noto_Sans',sans-serif] text-xs text-white">
      <Icon name="logo" className="size-4" />
      <span className="ml-1.5">Create New Node</span>
      <div className="ml-auto flex">
        <button type="button" aria-label="Minimize" className="flex w-[46px] justify-center">
          <svg className="size-2.5" fill="none" stroke="currentColor">
            <path d="M0 5.500h10" />
          </svg>
        </button>
        <button type="button" aria-label="Maximize" className="flex w-[46px] justify-center">
          <svg className="size-2.5" fill="none" stroke="currentColor">
            <rect x=".5" y=".5" width="9" height="9" rx="1" />
          </svg>
        </button>
        <button type="button" aria-label="Close" className="flex w-[46px] justify-center">
          <svg className="size-2.5" fill="none" stroke="currentColor">
            <path d="m0 0 10 10m0-10L0 10" />
          </svg>
        </button>
      </div>
    </div>
    <div className="flex min-h-0 flex-1 flex-col gap-2 p-[9px]">
      <div className="flex min-h-0 flex-1 gap-1">
        <div className="flex w-[150px] flex-col gap-1">
          <h3 className="h-7 px-1 leading-[26px] font-bold">Favorites:</h3>
          <div className="flex-1 rounded-xs bg-[#21262e]" />
          <h3 className="h-7 px-1 leading-[26px] font-bold">Recent:</h3>
          <div className="flex-1 rounded-xs bg-[#252b34]">
            <ul className="px-[7px] py-1">
              {recent.map(({ text, icon }) => (
                <li key={text} className="flex h-7 items-center gap-1.5">
                  <Icon name={icon} className="size-4 text-[#8da5f3]" />
                  {text}
                </li>
              ))}
            </ul>
          </div>
        </div>
        <div className="flex min-w-0 flex-1 flex-col gap-1">
          <label htmlFor="node-search" className="h-7 px-1 leading-[26px] font-bold">
            Search:
          </label>
          <div className="flex gap-1">
            <div className="flex h-[30px] flex-1 items-center rounded-xs border-2 border-[#70bafa] bg-[#252b34] px-1">
              <input
                id="node-search"
                type="text"
                defaultValue="Sprite"
                className="field-sizing-content bg-transparent outline-none"
              />
              <span className="h-[18px] w-px bg-[#e0e0e0]" />
              <IconButton icon="close" label="Clear search" className="ml-auto size-4 text-[#b9bcc0]" />
            </div>
            <IconButton icon="star" label="Favorite" className="h-[30px] w-7 bg-[#252b34] text-[#e0e0e0]" />
          </div>
          <h3 className="h-7 px-1 leading-[26px] font-bold">Matches:</h3>
          <div className="relative min-h-0 flex-1 rounded-xs bg-[#21262e] py-1">
            <Guides
              thin="M9.500 49v192.500h7M21.500 77v80.500h7M37 101.500h15M33.500 172v13.500h7M45.500 200v13.500h19M21.500 256v13.500h7M33.500 284v13.500h7M45.500 312v13.500h7M57.500 340v41.500h19M57.500 353.500h19"
              thick="M10 32v14h6M22 60v14h6M34 88v42h18"
            />
            <ul>
              {matches.map((item) => (
                <TreeRow key={item.text} {...item} />
              ))}
            </ul>
          </div>
          <h3 className="h-7 px-1 leading-[26px] font-bold">Description:</h3>
          <div className="h-[90px] rounded-xs bg-[#21262e]">
            <p className="h-[26px] rounded-t-xs bg-[#2b2e36] px-1 leading-[26px] font-bold">
              <span className="text-[#69aeec]">Class:</span>{" "}
              <a href="#sprite2d" className="underline">
                Sprite2D
              </a>
            </p>
            <p className="px-1 leading-[26px]">General-purpose sprite node.</p>
          </div>
        </div>
      </div>
      <div className="flex justify-evenly gap-1">
        <button type="button" className="h-[34px] w-[105px] rounded-xs bg-[#252b34]">
          Create
        </button>
        <button type="button" className="h-[34px] w-[105px] rounded-xs bg-[#252b34]">
          Cancel
        </button>
      </div>
    </div>
  </div>
);

const App = () => {
  return (
    <div className="relative flex h-screen flex-col overflow-hidden bg-[#1e2229] font-['Noto_Sans','Open_Sans',sans-serif] text-sm text-[#cdcfd2]">
      <TitleBar />
      <MenuBar />
      <main className="flex min-h-0 flex-1 gap-1 pr-1.5 pb-2 pl-2">
        <div className="flex w-[348px] shrink-0 flex-col gap-1">
          <SceneDock />
          <FileSystemDock />
        </div>
        <div className="flex min-w-0 flex-1 flex-col gap-1">
          <Viewport />
          <OutputPanel />
        </div>
        <Inspector />
      </main>
      <CreateNodeDialog />
    </div>
  );
};

export default App;
